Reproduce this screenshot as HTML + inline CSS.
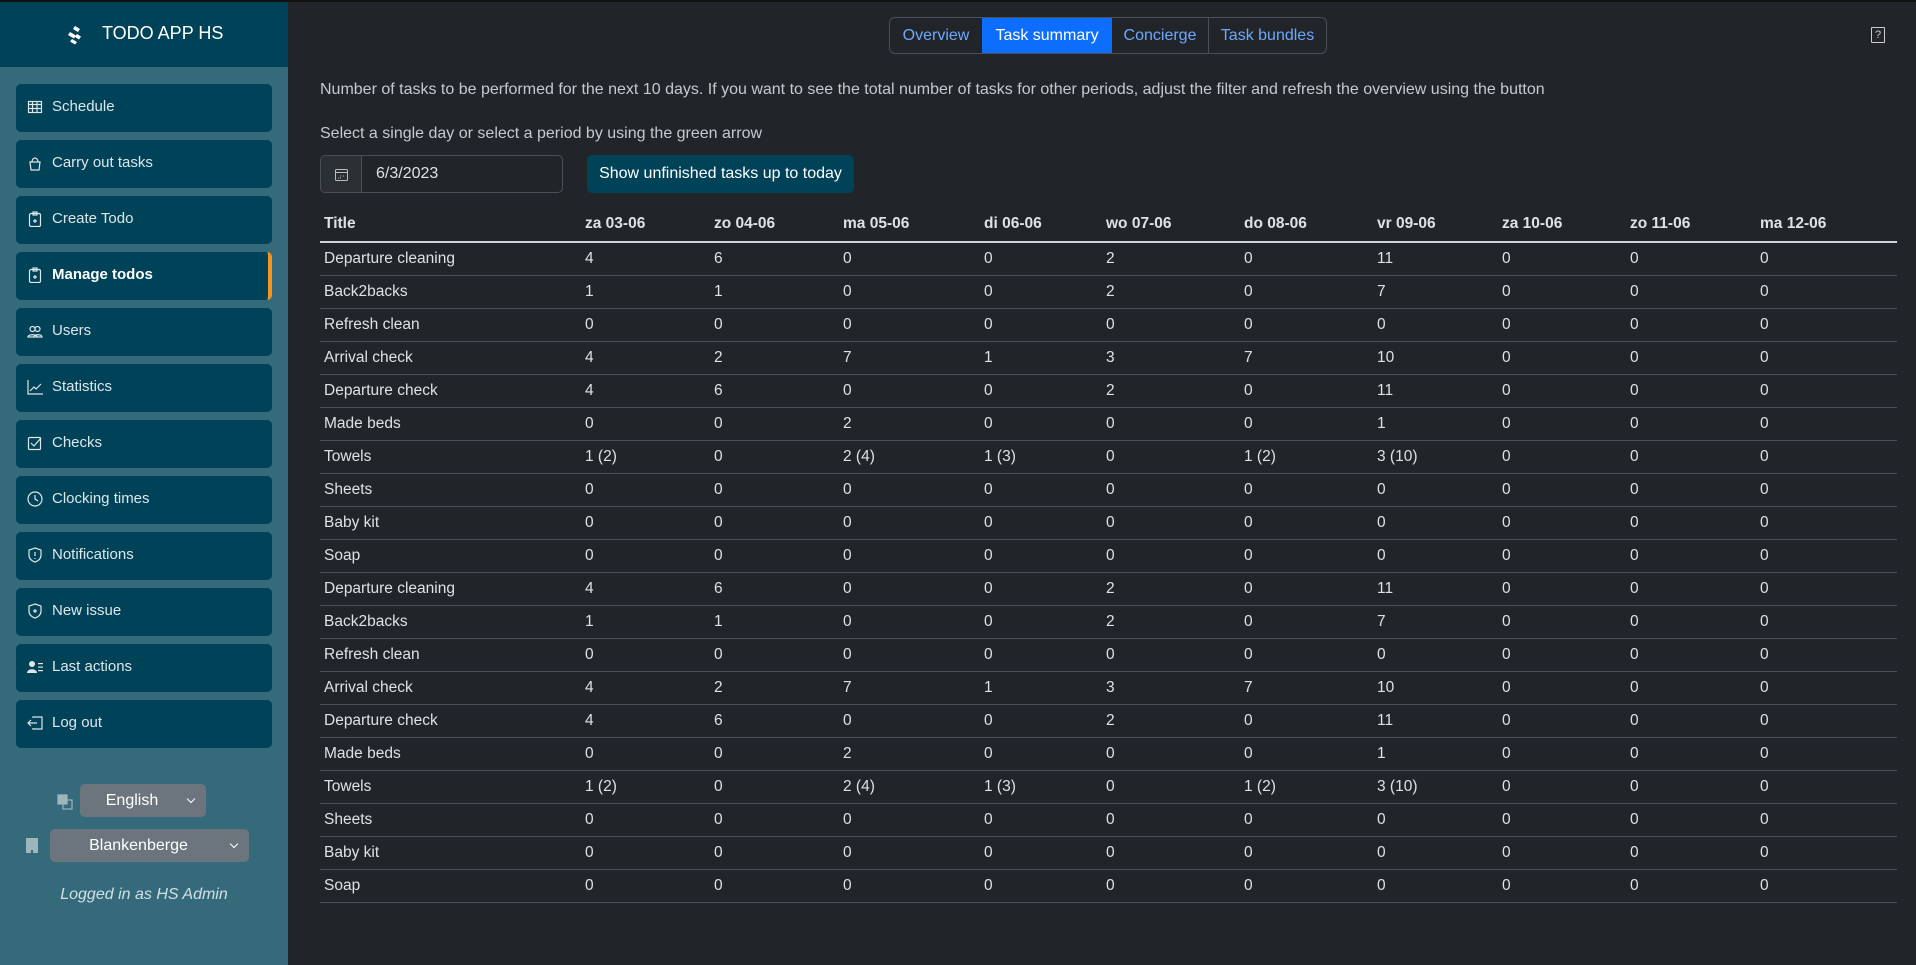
<!DOCTYPE html>
<html><head><meta charset="utf-8">
<style>
*{box-sizing:border-box;margin:0;padding:0}
body{width:1916px;height:965px;background:#212529;font-family:"Liberation Sans",sans-serif;color:#dee2e6;position:relative;overflow:hidden}
.topline{position:absolute;left:0;top:0;width:1916px;height:2px;background:#111}
.side{position:absolute;left:0;top:2px;width:288px;height:963px;background:#356a7b}
.head{position:absolute;left:0;top:0;width:288px;height:65px;background:#004257;color:#fff;font-size:18px}
.head span{position:absolute;left:102px;top:21px}
.nav{position:absolute;left:16px;width:256px;height:48px;background:#004257;border-radius:5px;color:#dde6ea;font-size:15px}
.nav .t{position:absolute;left:36px;top:14px}
.nav svg{position:absolute;left:11px;top:15px;width:16px;height:16px;fill:none;stroke:#dde6ea;stroke-width:1.2}
.nav.act{border-right:4px solid #f7941d;font-weight:bold;color:#fff}
.sel{position:absolute;background:#6c757d;border-radius:5px;color:#fff;font-size:16px;text-align:center;line-height:33px;height:33px;padding-right:22px}
.sel:after{content:"";position:absolute;right:12px;top:12px;width:5px;height:5px;border-right:1.5px solid #fff;border-bottom:1.5px solid #fff;transform:rotate(45deg)}
.tabs{position:absolute;left:889px;top:17px;height:37px;border:1px solid #495057;border-radius:6px;display:flex;overflow:hidden;font-size:16px}
.tabs div{height:35px;line-height:35px;color:#6ea8fe;text-align:center}
.p{position:absolute;left:320px;font-size:16px;color:#c5cad0}
table{position:absolute;left:320px;top:205px;border-collapse:collapse;table-layout:fixed;width:1577px;font-size:15.5px}
th{text-align:left;font-weight:bold;height:37px;padding:2px 4px 0;border-bottom:2px solid #ced4da;color:#dee2e6}
td{height:33px;padding:0 4px;border-bottom:1px solid #495057;color:#dee2e6}
</style></head><body>
<div class="topline"></div>
<div class="side">
 <div class="head">
  <svg style="position:absolute;left:66px;top:23px" width="18" height="20" viewBox="0 0 18 20"><g fill="#fff"><path d="M9 1l5 3-2 3-5-3z"/><path d="M4 7l6 3.5-2 3-6-3.5z"/><path d="M11 9l4 2.5-2 3-4-2.5z"/><path d="M6 14l5 3-2 2.5-5-3z"/></g></svg>
  <span>TODO APP HS</span>
 </div>
</div>

<div class="nav" style="top:84px"><svg viewBox="0 0 16 16"><rect x="1.5" y="2.5" width="13" height="11"/><path d="M1.5 5.5h13M1.5 9.5h13M5.5 2.5v11M10 2.5v11"/></svg><span class="t">Schedule</span></div>
<div class="nav" style="top:140px"><svg viewBox="0 0 16 16"><path d="M3 7h10l-1 8H4z M5 7a3 4 0 0 1 6 0"/></svg><span class="t">Carry out tasks</span></div>
<div class="nav" style="top:196px"><svg viewBox="0 0 16 16"><rect x="2.5" y="2.5" width="11" height="13" rx="1.5"/><rect x="6" y="1" width="4" height="3"/><path d="M8 8v4M6 10h4"/></svg><span class="t">Create Todo</span></div>
<div class="nav act" style="top:252px"><svg viewBox="0 0 16 16"><rect x="2.5" y="2.5" width="11" height="13" rx="1.5"/><rect x="6" y="1" width="4" height="3"/><path d="M8 8v4M6 10h4"/></svg><span class="t">Manage todos</span></div>
<div class="nav" style="top:308px"><svg viewBox="0 0 16 16"><circle cx="5.5" cy="6" r="2.5"/><circle cx="10.5" cy="6" r="2.5"/><path d="M1 14c0-3 9-3 9 0zM7 14c0-3 8-3 8 0z"/></svg><span class="t">Users</span></div>
<div class="nav" style="top:364px"><svg viewBox="0 0 16 16"><path d="M1 1v14h15M3 12l4-4 2 2 5-5"/></svg><span class="t">Statistics</span></div>
<div class="nav" style="top:420px"><svg viewBox="0 0 16 16"><rect x="1.5" y="2.5" width="12" height="12" rx="1"/><path d="M4 8l3 3 7-8"/></svg><span class="t">Checks</span></div>
<div class="nav" style="top:476px"><svg viewBox="0 0 16 16"><circle cx="8" cy="8" r="7"/><path d="M8 4v4l3 2"/></svg><span class="t">Clocking times</span></div>
<div class="nav" style="top:532px"><svg viewBox="0 0 16 16"><path d="M8 1l6 2v5c0 4-3 6-6 7-3-1-6-3-6-7V3z"/><path d="M8 5v4M8 11v1"/></svg><span class="t">Notifications</span></div>
<div class="nav" style="top:588px"><svg viewBox="0 0 16 16"><path d="M8 1l6 2v5c0 4-3 6-6 7-3-1-6-3-6-7V3z"/><path d="M8 6v4M6 8h4"/></svg><span class="t">New issue</span></div>
<div class="nav" style="top:644px"><svg viewBox="0 0 16 16" style="fill:#dde6ea;stroke:none"><circle cx="5" cy="5" r="3"/><path d="M0 14c0-5 10-5 10 0z"/><rect x="11" y="4" width="5" height="1.2"/><rect x="11" y="7.5" width="5" height="1.2"/><rect x="11" y="11" width="5" height="1.2"/></svg><span class="t">Last actions</span></div>
<div class="nav" style="top:700px"><svg viewBox="0 0 16 16"><path d="M6 3V2h9v12H6v-1M1 8h9M4 5L1 8l3 3"/></svg><span class="t">Log out</span></div>

<svg style="position:absolute;left:57px;top:794px" width="16" height="16" viewBox="0 0 16 16" fill="none" stroke="#9fb5bd" stroke-width="1.2"><rect x="1" y="1" width="9" height="9" fill="#9fb5bd"/><rect x="6" y="6" width="9" height="9"/></svg>
<div class="sel" style="left:80px;top:784px;width:126px">English</div>
<svg style="position:absolute;left:26px;top:838px" width="12" height="15" viewBox="0 0 12 15" fill="#9fb5bd"><path d="M0 0h12v15H7v-3H5v3H0z"/></svg>
<div class="sel" style="left:50px;top:829px;width:199px">Blankenberge</div>
<div style="position:absolute;left:0;width:288px;top:886px;text-align:center;font-style:italic;font-size:16px;color:#cfe0e6">Logged in as HS Admin</div>

<div class="tabs">
 <div style="width:92px">Overview</div>
 <div style="width:130px;background:#0d6efd;color:#fff">Task summary</div>
 <div style="width:97px;border-right:1px solid #495057">Concierge</div>
 <div style="width:117px">Task bundles</div>
</div>
<div style="position:absolute;left:1871px;top:27px;width:14px;height:16px;border:1px solid #ccc;border-radius:1px;font-size:11px;text-align:center;line-height:14px;color:#ccc">?</div>

<div class="p" style="top:81px">Number of tasks to be performed for the next 10 days. If you want to see the total number of tasks for other periods, adjust the filter and refresh the overview using the button</div>
<div class="p" style="top:125px">Select a single day or select a period by using the green arrow</div>

<div style="position:absolute;left:320px;top:155px;width:243px;height:38px;border:1px solid #495057;border-radius:5px;overflow:hidden">
 <div style="position:absolute;left:0;top:0;width:41px;height:36px;background:#2b3035;border-right:1px solid #495057"></div>
 <svg style="position:absolute;left:13px;top:11px" width="15" height="15" viewBox="0 0 15 15" fill="none" stroke="#bbb"><rect x="1.5" y="2.5" width="12" height="11" rx="1"/><path d="M1.5 5.5h12M6 9h1M9 9h1M4 11h1M6 11h1"/></svg>
 <span style="position:absolute;left:55px;top:9px;font-size:16px;color:#dee2e6">6/3/2023</span>
</div>
<div style="position:absolute;left:587px;top:155px;width:267px;height:38px;background:#004257;border-radius:5px;color:#fff;font-size:16px;text-align:center;line-height:38px">Show unfinished tasks up to today</div>

<table>
<colgroup><col style="width:261px"><col style="width:129px"><col style="width:129px"><col style="width:141px"><col style="width:122px"><col style="width:138px"><col style="width:133px"><col style="width:125px"><col style="width:128px"><col style="width:130px"><col style="width:141px"></colgroup>
<tr><th>Title</th><th>za 03-06</th><th>zo 04-06</th><th>ma 05-06</th><th>di 06-06</th><th>wo 07-06</th><th>do 08-06</th><th>vr 09-06</th><th>za 10-06</th><th>zo 11-06</th><th>ma 12-06</th></tr>
<tr><td>Departure cleaning</td><td>4</td><td>6</td><td>0</td><td>0</td><td>2</td><td>0</td><td>11</td><td>0</td><td>0</td><td>0</td></tr>
<tr><td>Back2backs</td><td>1</td><td>1</td><td>0</td><td>0</td><td>2</td><td>0</td><td>7</td><td>0</td><td>0</td><td>0</td></tr>
<tr><td>Refresh clean</td><td>0</td><td>0</td><td>0</td><td>0</td><td>0</td><td>0</td><td>0</td><td>0</td><td>0</td><td>0</td></tr>
<tr><td>Arrival check</td><td>4</td><td>2</td><td>7</td><td>1</td><td>3</td><td>7</td><td>10</td><td>0</td><td>0</td><td>0</td></tr>
<tr><td>Departure check</td><td>4</td><td>6</td><td>0</td><td>0</td><td>2</td><td>0</td><td>11</td><td>0</td><td>0</td><td>0</td></tr>
<tr><td>Made beds</td><td>0</td><td>0</td><td>2</td><td>0</td><td>0</td><td>0</td><td>1</td><td>0</td><td>0</td><td>0</td></tr>
<tr><td>Towels</td><td>1 (2)</td><td>0</td><td>2 (4)</td><td>1 (3)</td><td>0</td><td>1 (2)</td><td>3 (10)</td><td>0</td><td>0</td><td>0</td></tr>
<tr><td>Sheets</td><td>0</td><td>0</td><td>0</td><td>0</td><td>0</td><td>0</td><td>0</td><td>0</td><td>0</td><td>0</td></tr>
<tr><td>Baby kit</td><td>0</td><td>0</td><td>0</td><td>0</td><td>0</td><td>0</td><td>0</td><td>0</td><td>0</td><td>0</td></tr>
<tr><td>Soap</td><td>0</td><td>0</td><td>0</td><td>0</td><td>0</td><td>0</td><td>0</td><td>0</td><td>0</td><td>0</td></tr>
<tr><td>Departure cleaning</td><td>4</td><td>6</td><td>0</td><td>0</td><td>2</td><td>0</td><td>11</td><td>0</td><td>0</td><td>0</td></tr>
<tr><td>Back2backs</td><td>1</td><td>1</td><td>0</td><td>0</td><td>2</td><td>0</td><td>7</td><td>0</td><td>0</td><td>0</td></tr>
<tr><td>Refresh clean</td><td>0</td><td>0</td><td>0</td><td>0</td><td>0</td><td>0</td><td>0</td><td>0</td><td>0</td><td>0</td></tr>
<tr><td>Arrival check</td><td>4</td><td>2</td><td>7</td><td>1</td><td>3</td><td>7</td><td>10</td><td>0</td><td>0</td><td>0</td></tr>
<tr><td>Departure check</td><td>4</td><td>6</td><td>0</td><td>0</td><td>2</td><td>0</td><td>11</td><td>0</td><td>0</td><td>0</td></tr>
<tr><td>Made beds</td><td>0</td><td>0</td><td>2</td><td>0</td><td>0</td><td>0</td><td>1</td><td>0</td><td>0</td><td>0</td></tr>
<tr><td>Towels</td><td>1 (2)</td><td>0</td><td>2 (4)</td><td>1 (3)</td><td>0</td><td>1 (2)</td><td>3 (10)</td><td>0</td><td>0</td><td>0</td></tr>
<tr><td>Sheets</td><td>0</td><td>0</td><td>0</td><td>0</td><td>0</td><td>0</td><td>0</td><td>0</td><td>0</td><td>0</td></tr>
<tr><td>Baby kit</td><td>0</td><td>0</td><td>0</td><td>0</td><td>0</td><td>0</td><td>0</td><td>0</td><td>0</td><td>0</td></tr>
<tr><td>Soap</td><td>0</td><td>0</td><td>0</td><td>0</td><td>0</td><td>0</td><td>0</td><td>0</td><td>0</td><td>0</td></tr>
</table>
</body></html>
